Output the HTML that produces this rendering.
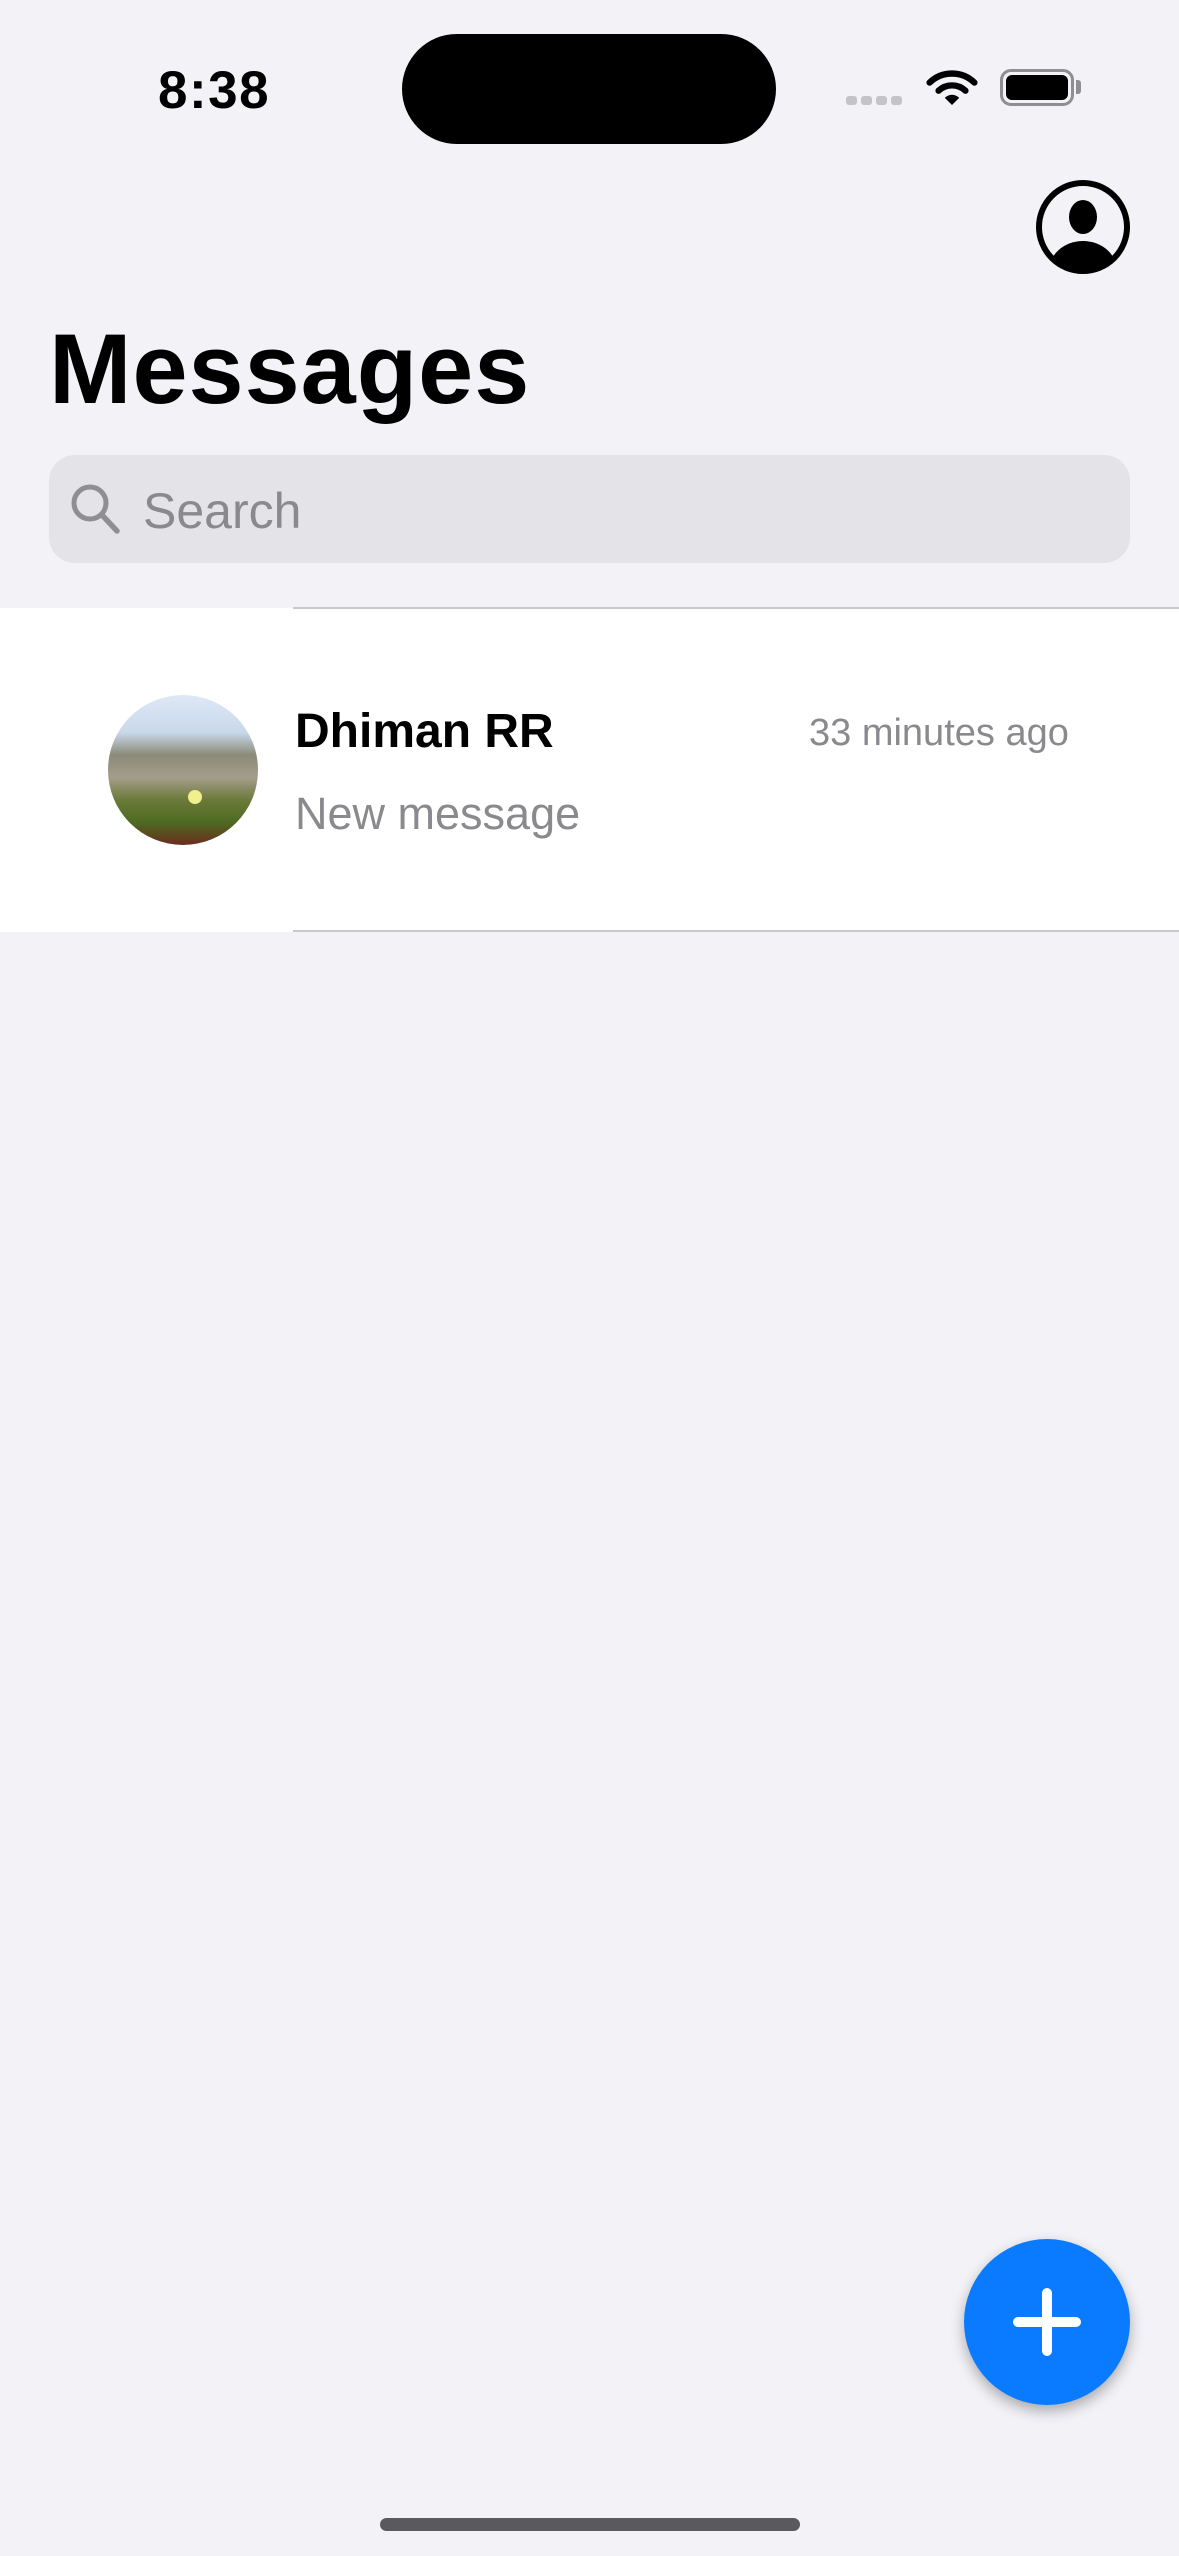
<!DOCTYPE html>
<html><head><meta charset="utf-8"><style>
*{margin:0;padding:0;box-sizing:border-box}
body{width:1179px;height:2556px;background:#f2f2f7;position:relative;overflow:hidden;font-family:"Liberation Sans",sans-serif}
.a{position:absolute}
</style></head><body>
<div class="a" style="left:158px;top:60px;font-size:53px;font-weight:bold;letter-spacing:1.5px">8:38</div>
<div class="a" style="left:402px;top:34px;width:374px;height:110px;border-radius:55px;background:#000"></div>
<div class="a" style="left:846px;top:96px;width:56px;height:9px;display:flex;gap:4px"><i style="flex:1;background:#c4c4c8;border-radius:3px"></i><i style="flex:1;background:#c4c4c8;border-radius:3px"></i><i style="flex:1;background:#c4c4c8;border-radius:3px"></i><i style="flex:1;background:#c4c4c8;border-radius:3px"></i></div>
<svg class="a" style="left:926px;top:70px" width="52" height="36" viewBox="0 0 58 40"><path d="M4 14 A36 36 0 0 1 54 14" stroke="#000" stroke-width="7" fill="none" stroke-linecap="round"/><path d="M14 23 A22 22 0 0 1 44 23" stroke="#000" stroke-width="7" fill="none" stroke-linecap="round"/><path d="M21 31 L29 39 L37 31 A11 11 0 0 0 21 31Z" fill="#000"/></svg>
<div class="a" style="left:1000px;top:69px;width:74px;height:37px;border:3px solid #8e8e93;border-radius:11px;padding:3px"><div style="width:100%;height:100%;background:#000;border-radius:6px"></div></div>
<div class="a" style="left:1076px;top:80px;width:5px;height:14px;background:#8e8e93;border-radius:0 3px 3px 0"></div>
<svg class="a" style="left:1035px;top:179px" width="96" height="96" viewBox="0 0 96 96"><defs><clipPath id="c"><circle cx="48" cy="48" r="44"/></clipPath></defs><circle cx="48" cy="48" r="44" fill="none" stroke="#000" stroke-width="6"/><ellipse cx="48" cy="38" rx="14" ry="17" fill="#000"/><ellipse cx="48" cy="92" rx="34" ry="30" fill="#000" clip-path="url(#c)"/></svg>
<div class="a" style="left:49px;top:310px;font-size:99px;font-weight:bold;line-height:1.2;letter-spacing:1px">Messages</div>
<div class="a" style="left:49px;top:455px;width:1081px;height:108px;background:#e3e3e8;border-radius:26px"></div>
<svg class="a" style="left:70px;top:483px" width="52" height="52" viewBox="0 0 52 52"><circle cx="20" cy="20" r="16" fill="none" stroke="#8e8e93" stroke-width="5"/><path d="M32 32 L47 48" stroke="#8e8e93" stroke-width="5.5" stroke-linecap="round"/></svg>
<div class="a" style="left:143px;top:481px;font-size:50px;color:#8a8a8e;line-height:1.2">Search</div>
<div class="a" style="left:0;top:608px;width:1179px;height:324px;background:#fff"></div>
<div class="a" style="left:293px;top:607px;width:886px;height:2px;background:#c9c9cd"></div>
<div class="a" style="left:293px;top:930px;width:886px;height:2px;background:#c9c9cd"></div>
<div class="a" style="left:108px;top:695px;width:150px;height:150px;border-radius:50%;overflow:hidden;background:linear-gradient(180deg,#dfe8f6 0%,#c8d8ea 25%,#8b8a78 40%,#a59d8c 55%,#6b7a3a 70%,#4d6a22 85%,#6a2d1e 100%)"><div style="position:absolute;left:80px;top:95px;width:14px;height:14px;border-radius:50%;background:#f1ef8e"></div></div>
<div class="a" style="left:295px;top:703px;font-size:48px;font-weight:bold;line-height:1.2">Dhiman RR</div>
<div class="a" style="left:809px;top:711px;font-size:38px;color:#8a8a8e;line-height:1.2">33 minutes ago</div>
<div class="a" style="left:295px;top:787px;font-size:45px;color:#8a8a8e;line-height:1.2">New message</div>
<div class="a" style="left:964px;top:2239px;width:166px;height:166px;border-radius:50%;background:#0a7bff;box-shadow:0 6px 14px rgba(0,0,0,.3)"></div>
<div class="a" style="left:1013px;top:2317px;width:68px;height:10px;background:#fff;border-radius:5px"></div>
<div class="a" style="left:1042px;top:2288px;width:10px;height:68px;background:#fff;border-radius:5px"></div>
<div class="a" style="left:380px;top:2518px;width:420px;height:13px;background:#5a5a5e;border-radius:7px"></div>
</body></html>
